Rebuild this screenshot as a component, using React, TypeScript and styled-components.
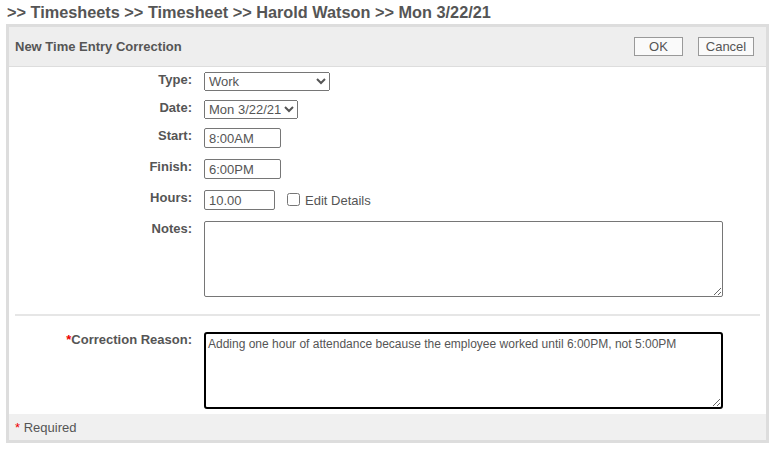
import React from 'react'
import styled, { createGlobalStyle } from 'styled-components'

const GlobalStyle = createGlobalStyle`
  body {
    margin: 0;
    background: #fff;
    font-family: Arial, "Liberation Sans", sans-serif;
    color: #555;
  }
`

const Breadcrumb = styled.h1`
  margin: 0;
  padding: 3px 0 0 7px;
  height: 21px;
  font-size: 16.3px;
  line-height: 18px;
  font-weight: bold;
  color: #555;
`

const Panel = styled.div`
  margin-left: 6px;
  width: 763px;
  box-sizing: border-box;
  border: 3px solid #ddd;
  background: #fff;
`

const Header = styled.div`
  display: flex;
  align-items: center;
  justify-content: space-between;
  height: 39px;
  padding: 0 12px 0 6px;
  background: #eee;
  border-bottom: 1px solid #ddd;
`

const HeaderTitle = styled.div`
  font-size: 13px;
  font-weight: bold;
  color: #555;
`

const Actions = styled.div`
  display: flex;
  gap: 15px;
`

const Button = styled.button<{ $width: number }>`
  width: ${p => p.$width}px;
  height: 19px;
  padding: 0;
  background: #fafafa;
  border: 1px solid #999;
  border-radius: 0;
  font-family: Arial, "Liberation Sans", sans-serif;
  font-size: 13px;
  color: #555;
`

const Form = styled.div`
  padding-top: 5px;
`

const Row = styled.div<{ $space: number }>`
  display: grid;
  grid-template-columns: 183px 1fr;
  column-gap: 12px;
  align-items: start;
  margin-bottom: ${p => p.$space}px;
`

const Label = styled.label`
  text-align: right;
  font-size: 13px;
  font-weight: bold;
  line-height: 16px;
  color: #555;
`

const Required = styled.span`
  color: #e00;
`

const Field = styled.div`
  display: flex;
  align-items: center;
`

const Select = styled.select<{ $width: number }>`
  box-sizing: border-box;
  width: ${p => p.$width}px;
  height: 19px;
  font-family: Arial, "Liberation Sans", sans-serif;
  font-size: 13px;
  color: #555;
`

const TextInput = styled.input<{ $width: number }>`
  box-sizing: border-box;
  width: ${p => p.$width}px;
  height: 20px;
  padding: 1px 4px 0;
  border: 1px solid #767676;
  border-radius: 2px;
  font-family: Arial, "Liberation Sans", sans-serif;
  font-size: 13px;
  color: #555;
`

const CheckLabel = styled.label`
  display: flex;
  align-items: center;
  margin-left: 12px;
  font-size: 13px;
  color: #555;

  input {
    margin: 0 5px 2px 0;
    width: 13px;
    height: 13px;
  }
`

const TextArea = styled.textarea<{ $active?: boolean }>`
  box-sizing: border-box;
  display: block;
  width: 519px;
  height: ${p => (p.$active ? 77 : 76)}px;
  padding: 3px 2px;
  border: ${p => (p.$active ? '2px solid #000' : '1px solid #767676')};
  border-radius: ${p => (p.$active ? '3px' : '2px')};
  outline: none;
  font-family: Arial, "Liberation Sans", sans-serif;
  font-size: 12px;
  color: #555;
  resize: both;
`

const Divider = styled.hr`
  margin: 0 6px 16px 6px;
  border: 0;
  border-top: 2px solid #e6e6e6;
`

const Footer = styled.div`
  margin-top: 5px;
  height: 26px;
  padding-left: 6px;
  display: flex;
  align-items: center;
  background: #f0f0f0;
  font-size: 13px;
  color: #555;
`

export default function App() {
  return (
    <>
      <GlobalStyle />
      <Breadcrumb>&gt;&gt; Timesheets &gt;&gt; Timesheet &gt;&gt; Harold Watson &gt;&gt; Mon 3/22/21</Breadcrumb>
      <Panel>
        <Header>
          <HeaderTitle>New Time Entry Correction</HeaderTitle>
          <Actions>
            <Button $width={49}>OK</Button>
            <Button $width={56}>Cancel</Button>
          </Actions>
        </Header>
        <Form>
          <Row $space={9}>
            <Label>Type:</Label>
            <Field>
              <Select $width={126} defaultValue="Work">
                <option>Work</option>
                <option>Break</option>
              </Select>
            </Field>
          </Row>
          <Row $space={9}>
            <Label>Date:</Label>
            <Field>
              <Select $width={94} defaultValue="Mon 3/22/21">
                <option>Mon 3/22/21</option>
              </Select>
            </Field>
          </Row>
          <Row $space={11}>
            <Label>Start:</Label>
            <Field>
              <TextInput $width={77} defaultValue="8:00AM" />
            </Field>
          </Row>
          <Row $space={11}>
            <Label>Finish:</Label>
            <Field>
              <TextInput $width={77} defaultValue="6:00PM" />
            </Field>
          </Row>
          <Row $space={11}>
            <Label>Hours:</Label>
            <Field>
              <TextInput $width={71} defaultValue="10.00" />
              <CheckLabel>
                <input type="checkbox" />
                Edit Details
              </CheckLabel>
            </Field>
          </Row>
          <Row $space={17}>
            <Label>Notes:</Label>
            <Field>
              <TextArea />
            </Field>
          </Row>
          <Divider />
          <Row $space={0}>
            <Label>
              <Required>*</Required>Correction Reason:
            </Label>
            <Field>
              <TextArea
                $active
                defaultValue="Adding one hour of attendance because the employee worked until 6:00PM, not 5:00PM"
              />
            </Field>
          </Row>
        </Form>
        <Footer>
          <Required>*</Required>&nbsp;Required
        </Footer>
      </Panel>
    </>
  )
}
